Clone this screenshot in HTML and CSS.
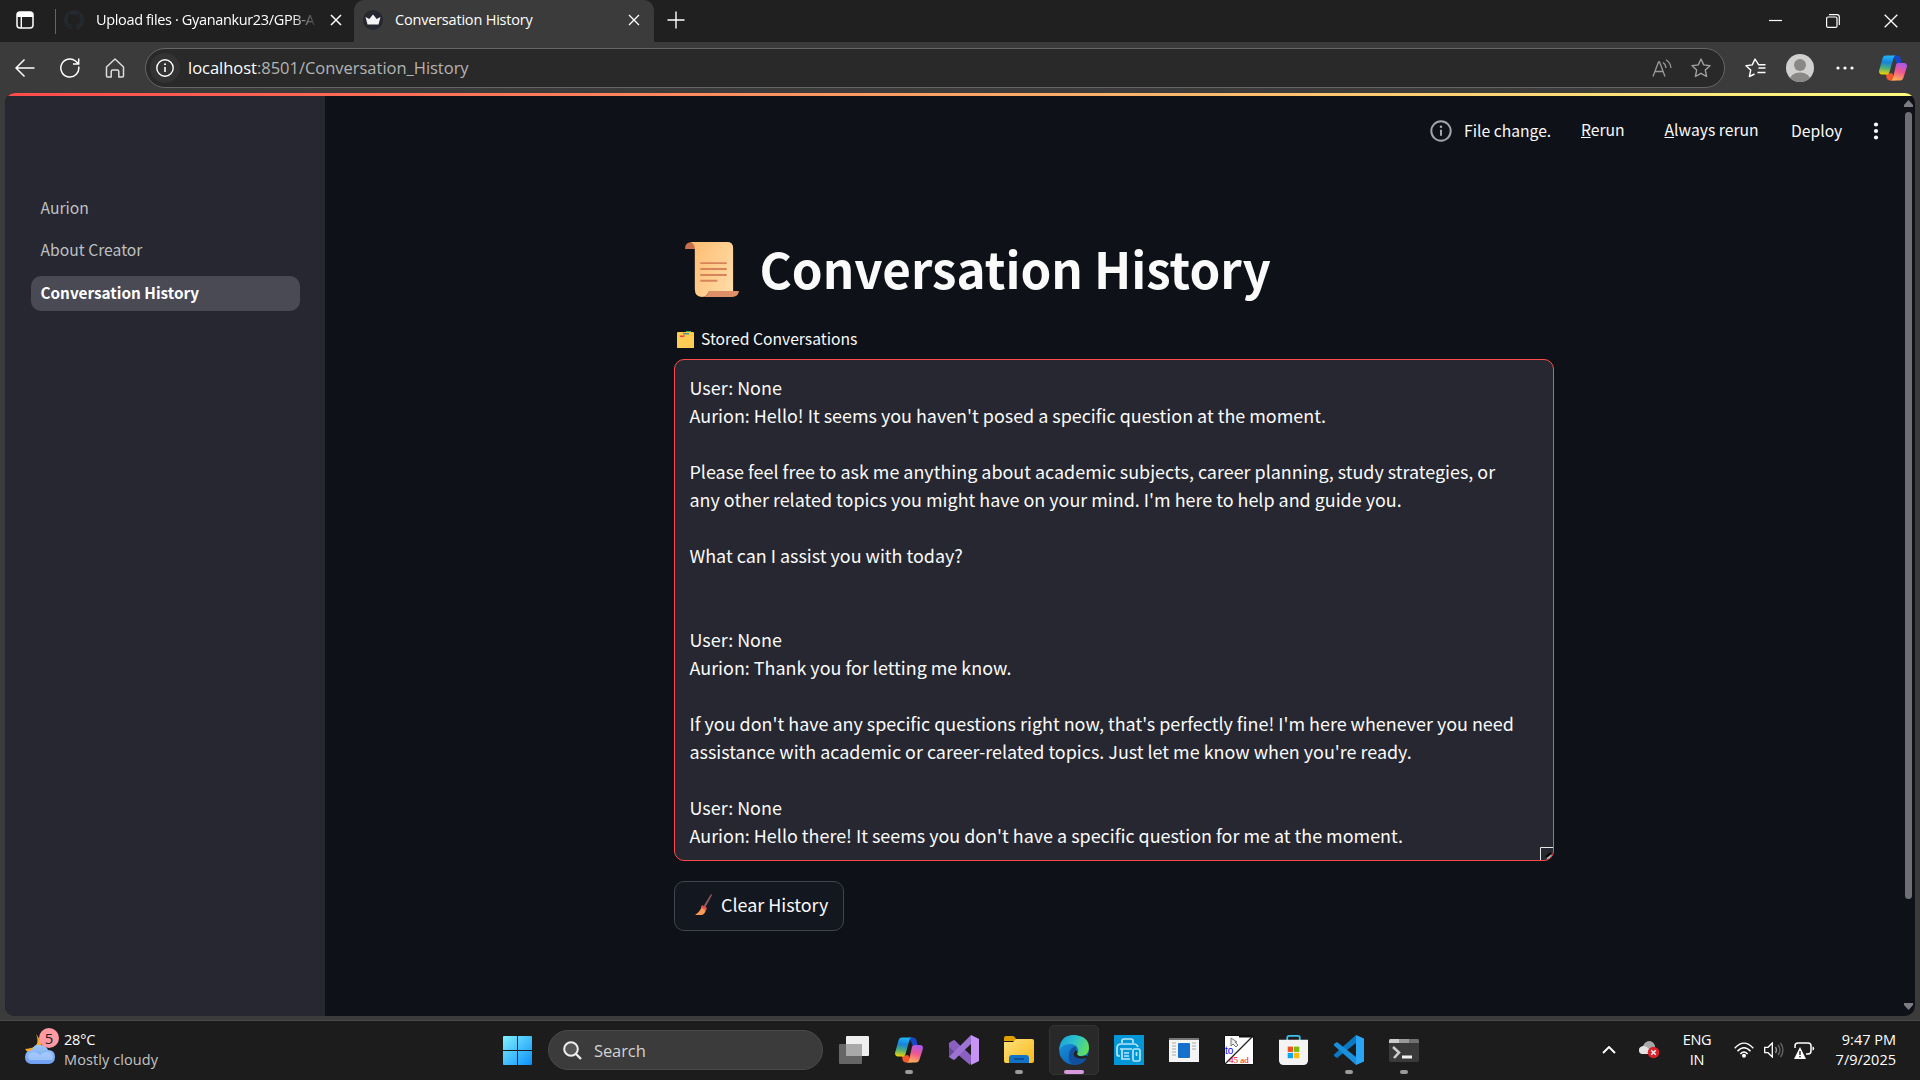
FILE: index.html
```html
<!DOCTYPE html>
<html lang="en">
<head>
<meta charset="utf-8">
<title>Conversation History</title>
<link rel="stylesheet" href="styles.css">
</head>
<body>
<svg width="0" height="0" class="defs">
  <defs>
    <linearGradient id="cpA" x1="0.3" y1="0" x2="0.2" y2="1"><stop offset="0" stop-color="#20b4f5"/><stop offset=".35" stop-color="#1684dc"/><stop offset=".65" stop-color="#4fae7b"/><stop offset="1" stop-color="#f5d500"/></linearGradient>
    <linearGradient id="cpB" x1="0.7" y1="0" x2="0.4" y2="1"><stop offset="0" stop-color="#a957f0"/><stop offset=".5" stop-color="#f0588f"/><stop offset="1" stop-color="#ffb057"/></linearGradient>
    <linearGradient id="win" gradientUnits="userSpaceOnUse" x1="0" y1="0" x2="30" y2="30"><stop offset="0" stop-color="#80f0ff"/><stop offset="1" stop-color="#0a90f8"/></linearGradient>
    <linearGradient id="fold" x1="0" y1="0" x2="1" y2="1"><stop offset="0" stop-color="#ffe07a"/><stop offset="1" stop-color="#fbb91a"/></linearGradient>
    <linearGradient id="edA" x1="0" y1="0.2" x2="1" y2="0.6"><stop offset="0" stop-color="#1aa0e0"/><stop offset=".5" stop-color="#2fc4c8"/><stop offset="1" stop-color="#62e05c"/></linearGradient>
    <linearGradient id="edB" x1="0" y1="0" x2="0.6" y2="1"><stop offset="0" stop-color="#1b9de2"/><stop offset="1" stop-color="#0c62b8"/></linearGradient>
    <linearGradient id="scr" x1="0" y1="0.2" x2="1" y2="0.8"><stop offset="0" stop-color="#ffbe75"/><stop offset="1" stop-color="#ffdba6"/></linearGradient>
    <linearGradient id="cloud" x1="0" y1="0" x2="0" y2="1"><stop offset="0" stop-color="#9cc6fb"/><stop offset="1" stop-color="#6d9df0"/></linearGradient>
    <symbol id="copilot" viewBox="0 0 28 26">
      <path d="M14 .5h4c2 0 3 1 3.500 3l1 4.500h-5z" fill="#1547c8"/>
      <path d="M7 19l6-1 4 7.500h-6c-2 0-3-1-3.500-3z" fill="#f0582e"/>
      <path d="M7 .5h10c-1 0-2 .8-2.500 2.500L10.500 17c-.6 2-1.500 2.500-3 2.500H3c-2.500 0-3.500-2-2.700-4.500L3.500 3.500C4 1.500 5.200.5 7 .5z" fill="url(#cpA)"/>
      <path d="M19.500 8H25c2.500 0 3.500 2 2.700 4.500l-3.200 10c-.6 2-1.700 3-3.500 3H11c1.500 0 2.500-.8 3-2.500L17 10c.4-1.400 1.200-2 2.500-2z" fill="url(#cpB)"/>
    </symbol>
  </defs>
</svg>

<header class="tabstrip">
  <svg class="workspaces" width="18" height="18" viewBox="0 0 18 18"><rect x="1" y="1" width="16" height="16" rx="3" fill="none" stroke="#fff" stroke-width="1.500"/><path d="M1 3.500Q1 1 4 1h10q3 0 3 2.500V6H1z" fill="#fff"/><path d="M5.300 5v12" stroke="#fff" stroke-width="1.400"/></svg>
  <span class="divider"></span>
  <div class="tab">
    <svg width="20" height="20" viewBox="0 0 16 16"><path fill="#24292f" d="M8 0a8 8 0 0 0-2.530 15.590c.4.070.55-.17.55-.38v-1.490c-2.010.37-2.530-.49-2.690-.94-.09-.23-.48-.94-.82-1.130-.28-.15-.68-.52-.01-.53.63-.01 1.080.58 1.230.82.72 1.210 1.870.87 2.330.66.070-.52.280-.87.510-1.070-1.780-.2-3.640-.89-3.640-3.950 0-.87.310-1.590.82-2.150-.08-.2-.36-1.020.08-2.120 0 0 .67-.21 2.200.82a7.600 7.600 0 0 1 4 0c1.530-1.040 2.200-.82 2.200-.82.44 1.100.16 1.920.08 2.120.51.56.82 1.270.82 2.150 0 3.070-1.870 3.750-3.650 3.950.29.25.54.73.54 1.480v2.200c0 .21.150.46.55.38A8 8 0 0 0 8 0z"/></svg>
    <span class="tab-title fade">Upload files · Gyanankur23/GPB-A</span>
    <svg class="x" width="12" height="12" viewBox="0 0 12 12"><path d="M1 1l10 10M11 1L1 11" stroke="#fff" stroke-width="1.500"/></svg>
  </div>
  <div class="tab active">
    <svg width="20" height="20" viewBox="0 0 20 20"><circle cx="10" cy="10" r="10" fill="#262730"/><path d="M2.500 7l3.800 2L10 4.500 13.700 9l3.800-2-2 7.500h-11z" fill="#f4f4f6"/></svg>
    <span class="tab-title">Conversation History</span>
    <svg class="x" width="12" height="12" viewBox="0 0 12 12"><path d="M1 1l10 10M11 1L1 11" stroke="#fff" stroke-width="1.300"/></svg>
  </div>
  <svg class="newtab" width="18" height="18" viewBox="0 0 18 18"><path d="M9 .5v17M.5 9h17" stroke="#fff" stroke-width="1.400"/></svg>
  <div class="winctl">
    <svg width="13" height="14" viewBox="0 0 13 14"><path d="M0 6.500h13" stroke="#fff" stroke-width="1.200"/></svg>
    <svg width="14" height="14" viewBox="0 0 14 14" fill="none" stroke="#fff" stroke-width="1.200"><rect x=".6" y="3" width="10.400" height="10.400" rx="1.500"/><path d="M3 .7h8q2.300 0 2.300 2.300v8"/></svg>
    <svg width="14" height="14" viewBox="0 0 14 14"><path d="M.7.7l12.600 12.600M13.300.7L.7 13.300" stroke="#fff" stroke-width="1.300"/></svg>
  </div>
</header>

<nav class="toolbar">
  <svg class="nb" width="20" height="20" viewBox="0 0 20 20" fill="none" stroke="#fff" stroke-width="1.500"><path d="M19.500 10H1M9.500 1.500L1 10l8.500 8.500"/></svg>
  <svg class="nb" width="20" height="20" viewBox="0 0 20 20" fill="none" stroke="#fff" stroke-width="1.500"><path d="M18.700 8.500A9 9 0 1 1 15.500 3l2.700 2.500M18.700.5v5.500H13"/></svg>
  <svg class="nb" width="20" height="20" viewBox="0 0 20 20" fill="none" stroke="#ddd" stroke-width="1.500" stroke-linejoin="round"><path d="M1.500 9L10 1l8.500 8v9q0 1-1 1h-3.700v-5.500q0-1.500-1.500-1.500h-4.600q-1.500 0-1.500 1.500V19H2.500q-1 0-1-1z"/></svg>
  <div class="omnibox">
    <span class="site"><svg width="18" height="18" viewBox="0 0 18 18"><circle cx="9" cy="9" r="8.200" fill="none" stroke="#fff" stroke-width="1.400"/><path d="M9 8v5" stroke="#fff" stroke-width="1.600"/><circle cx="9" cy="5.300" r="1" fill="#fff"/></svg></span>
    <span class="url"><b>localhost</b>:8501/Conversation_History</span>
    <svg class="read" width="20" height="18" viewBox="0 0 20 18" fill="none" stroke="#999" stroke-width="1.300"><path d="M1 17.500L6.500 3h1L13 17.500M3 12.500h8M11 3.500q2.500 1.500 3 5.500M14 .7q4.500 3 5 8.300"/></svg>
    <svg class="star" width="20" height="20" viewBox="0 0 20 20" fill="none" stroke="#a0a0a0" stroke-width="1.400" stroke-linejoin="round"><path d="M10 1l2.700 5.900 6.300.8-4.700 4.400 1.300 6.400L10 15.300l-5.600 3.200 1.300-6.400L1 7.700l6.300-.8z"/></svg>
  </div>
  <svg class="fav" width="21" height="20" viewBox="0 0 21 20" fill="none" stroke="#fff" stroke-width="1.400" stroke-linejoin="round"><path d="M20.500 10h-7M20.500 14.500h-8M20.500 6.700h-7L10 1 7.300 6.900 1 7.700l4.700 4.400-1.300 6.400L9.500 16"/></svg>
  <svg class="avatar" width="28" height="28" viewBox="0 0 28 28"><defs><clipPath id="av"><circle cx="14" cy="14" r="14"/></clipPath></defs><g clip-path="url(#av)"><rect width="28" height="28" fill="#d2d0ce"/><circle cx="14" cy="11" r="6" fill="#8a8886"/><ellipse cx="14" cy="26.500" rx="10.500" ry="8" fill="#8a8886"/></g></svg>
  <svg class="more" width="18" height="4" viewBox="0 0 18 4" fill="#fff"><circle cx="2" cy="2" r="1.600"/><circle cx="9" cy="2" r="1.600"/><circle cx="16" cy="2" r="1.600"/></svg>
  <svg class="cop" width="28" height="26"><use href="#copilot"/></svg>
</nav>

<div class="frame">
  <div class="page">
    <div class="decoration"></div>
    <aside class="sidebar">
      <a class="nav">Aurion</a>
      <a class="nav">About Creator</a>
      <a class="nav current">Conversation History</a>
    </aside>
    <main class="main">
      <div class="status">
        <svg width="22" height="22" viewBox="0 0 22 22"><circle cx="11" cy="11" r="9.700" fill="none" stroke="#a3a5a9" stroke-width="2"/><path d="M11 9.800v6" stroke="#a3a5a9" stroke-width="2"/><circle cx="11" cy="6.800" r="1.300" fill="#a3a5a9"/></svg>
        <span class="s-file">File change.</span>
        <span class="s-rerun"><u>R</u>erun</span>
        <span class="s-always"><u>A</u>lways rerun</span>
        <span class="s-deploy">Deploy</span>
        <svg class="kebab" width="6" height="18" viewBox="0 0 6 18" fill="#fafafa"><circle cx="3" cy="2.500" r="2.100"/><circle cx="3" cy="9" r="2.100"/><circle cx="3" cy="15.500" r="2.100"/></svg>
      </div>
      <section class="content">
        <h1>
          <svg width="54" height="55" viewBox="0 0 55 56"><path d="M0 7Q0 0 7 0q5 0 5 7z" fill="#c8704c"/><path d="M6 0h37q6 0 6 6v45H24q-2 5-6 5-8 0-8-8V7q0-5-4-7z" fill="url(#scr)"/><path d="M24 50h31q-1 6-7 6H17q6 0 7-6z" fill="#df8f68"/><g stroke="#d8845a" stroke-width="2"><path d="M15.500 21.500h27M15.500 27.500h27M15.500 33.500h27M15.500 39.500H33"/></g></svg>
          <span>Conversation History</span>
        </h1>
        <div class="label">
          <svg width="17" height="17" viewBox="0 0 17 17"><path d="M9 0h5v3H9z" fill="#32b36a"/><rect y="1" width="17" height="16" rx="1" fill="#ffca45"/><path d="M6 2h6v1.500H6z" fill="#5a8f9b"/><path d="M0 6h7l2-1.500h8V16q0 1-1 1H1q-1 0-1-1z" fill="#ffcb55"/><path d="M3 4.500h5L7 6H3z" fill="#f0405a"/></svg>
          <span>Stored Conversations</span>
        </div>
        <div class="textarea"><p>User: None</p><p>Aurion: Hello! It seems you haven't posed a specific question at the moment.</p><p></p><p>Please feel free to ask me anything about academic subjects, career planning, study strategies, or</p><p>any other related topics you might have on your mind. I'm here to help and guide you.</p><p></p><p>What can I assist you with today?</p><p></p><p></p><p>User: None</p><p>Aurion: Thank you for letting me know.</p><p></p><p>If you don't have any specific questions right now, that's perfectly fine! I'm here whenever you need</p><p>assistance with academic or career-related topics. Just let me know when you're ready.</p><p></p><p>User: None</p><p>Aurion: Hello there! It seems you don't have a specific question for me at the moment.</p>
          <svg class="grip" width="13" height="13" viewBox="0 0 13 13"><path d="M.5 13V.5H13" fill="none" stroke="#e6e6e6"/><path d="M6 10l5-4" stroke="#000" stroke-width="2"/><path d="M7 12l5-4" stroke="#b4b4b4" stroke-width="2"/></svg>
        </div>
        <div class="clear">
          <svg width="17" height="21" viewBox="0 0 17 21"><path d="M16 0l1 1-7 13-2-1z" fill="#8e5a5e"/><path d="M7 12l4 3q-1 6-5 6H0q5-3 7-9z" fill="#f79a56"/><path d="M7 11l5 3-1 2.500-5-3z" fill="#e2564d"/></svg>
          <span>Clear History</span>
        </div>
      </section>
    </main>
    <div class="scroll">
      <svg width="9" height="7" viewBox="0 0 9 7"><path d="M4.500 0L9 5v2H0V5z" fill="#7b7d80"/></svg>
      <span class="thumb"></span>
      <svg width="9" height="7" viewBox="0 0 9 7"><path d="M4.500 7L9 2V0H0v2z" fill="#7b7d80"/></svg>
    </div>
  </div>
</div>

<footer class="taskbar">
  <div class="weather">
    <svg width="34" height="38" viewBox="0 0 34 38"><path d="M11 6q6 14-11 15 4 6 12 4 9-6-1-19z" fill="#f9a825"/><path d="M6 36q-6-1-6-7t7-7q2-6 8-5 6 0 8 5 7 0 7 7 0 6-6 7z" fill="url(#cloud)"/><path d="M3 27q4-5 9-2l3 2q5-5 11-2 3 4 1 7H4z" fill="#b4d3ff" opacity=".6"/><circle cx="24" cy="10" r="10" fill="#ff99a4"/><text x="24" y="15.500" text-anchor="middle" class="badge">5</text></svg>
    <div><div class="deg">28°C</div><div class="sky">Mostly cloudy</div></div>
  </div>
  <svg class="start" width="29" height="29" viewBox="0 0 30 30" fill="url(#win)"><path d="M1 0h13.500v14.500H0V1q0-1 1-1zM15.500 0H29q1 0 1 1v13.500H15.500zM0 15.500h14.500V30H1q-1 0-1-1zM15.500 15.500H30V29q0 1-1 1H15.500z"/></svg>
  <div class="search">
    <svg width="19" height="19" viewBox="0 0 19 19" fill="none" stroke="#eee" stroke-width="2"><circle cx="8" cy="8" r="6.800" fill="#555"/><path d="M13 13l5 5" stroke-width="2.400"/></svg>
    <span>Search</span>
  </div>
  <div class="apps">
    <div class="app"><svg width="30" height="28" viewBox="0 0 30 28"><rect x="7" width="23" height="20" rx="1" fill="#efefef"/><rect y="8" width="23" height="20" rx="1" fill="#666"/><path d="M7 8h16v12H7z" fill="#a9a9a9"/></svg></div>
    <div class="app"><svg width="28" height="26"><use href="#copilot"/></svg><i></i></div>
    <div class="app"><svg width="30" height="30" viewBox="0 0 30 30"><path d="M0 8l5-3 3 2v16l-3 2-5-3z" fill="#6b4a9c"/><path d="M5 5l19 17-3 8L0 12V8z" fill="#8a5fc0"/><path d="M0 22L22 0v9L5 25z" fill="#9c72d2"/><path d="M22 0l8 4v22l-8 4V0z" fill="#c793f5"/></svg></div>
    <div class="app"><svg width="30" height="28" viewBox="0 0 30 28"><path d="M0 2q0-2 2-2h7q1.500 0 3 3l1 2H0z" fill="#dfa000"/><path d="M0 6h9l3-3h16q2 0 2 2v20q0 2-2 2H2q-2 0-2-2z" fill="url(#fold)"/><path d="M5 27v-5q0-3 3-3h14q3 0 3 3v5z" fill="#1073c8"/><path d="M10 23h10" stroke="#0a4b8c" stroke-width="1.600"/></svg><i></i></div>
    <div class="app on"><svg width="30" height="30" viewBox="0 0 30 30"><circle cx="15" cy="15" r="14.800" fill="url(#edB)"/><path d="M10 21q0-9 8-10-2 3 0 8 2 4 10 3-3 8-13 8Q9 28 10 21z" fill="#12509c"/><path d="M.3 15Q1 0 15 0q15 1 15 13 0 7-8 8-4 0-4-2 2-2 1-5-2-5-8-5-8 0-10.700 6z" fill="url(#edA)"/><path d="M17 15q2 1 1 4 1 3 6 2 3-.5 5 0l-1 2q-8 2-12-1-3-3 1-7z" fill="#242424"/></svg><i></i></div>
    <div class="app"><svg width="30" height="30" viewBox="0 0 30 30" fill="none" stroke="#b5e6fb" stroke-width="1.700"><path d="M0 0h30v30H0z" fill="#0096d8" stroke="none"/><path d="M8 8V6q0-2 2-2h7q2 0 2 2v2M6 21H5q-2 0-2-2v-6q0-4 4-4h13q3 0 4 3M6 14h12M8 14v10h8M10 18h5M10 21h5"/><rect x="19" y="14" width="7" height="12" rx="1.500"/><path d="M22.500 17v4"/></svg></div>
    <div class="app"><svg width="30" height="24" viewBox="0 0 30 24"><path d="M0 1h30v23H0z" fill="#f4f4f4"/><path d="M0 0h30v2H0z" fill="#777"/><rect x="9" y="5" width="12" height="15" rx="1" fill="#1470cc"/><path d="M3 5h4M3 8h4M3 11h4M3 14h4M3 17h4M23 5h4M23 8h4M23 11h4" stroke="#aaa" stroke-width="1.200"/></svg></div>
    <div class="app"><svg width="30" height="30" viewBox="0 0 30 30"><path d="M.5.5h29v29H.5z" fill="#fff" stroke="#111"/><path d="M15 1h14v1.500H15z" fill="#111"/><path d="M1 29L28 2" stroke="#222" stroke-width="1.200"/><path d="M7 3v8l2-2 3 3 2-2-3-3h2z" fill="#eee" stroke="#777"/><text x="1" y="19" class="t-to">to</text><text x="5" y="28" class="t-red">45 ad</text></svg></div>
    <div class="app store"><svg width="29" height="30" viewBox="0 0 30 31"><path d="M8.500 8V3q0-2 2-2h9q2 0 2 2v5" fill="none" stroke="#3cc2f2" stroke-width="1.800"/><path d="M0 5h30v21q0 5-5 5H5q-5 0-5-5z" fill="#f3f3f3"/><path d="M9 12h5.500v5.500H9z" fill="#f05024"/><path d="M15.500 12H21v5.500h-5.500z" fill="#80bb03"/><path d="M9 18.500h5.500V24H9z" fill="#04a6f0"/><path d="M15.500 18.500H21V24h-5.500z" fill="#ffba08"/></svg></div>
    <div class="app"><svg width="30" height="30" viewBox="0 0 30 30"><path d="M0 19.500L22 0v8L3 23 0 21z" fill="#0a78c2"/><path d="M0 10.500L22 30v-8L3 7 0 9z" fill="#1a8fdc"/><path d="M22 0l8 3.500v23L22 30z" fill="#2aa4f4"/></svg><i></i></div>
    <div class="app"><svg width="30" height="23" viewBox="0 0 30 23"><rect width="30" height="23" rx="1.500" fill="#3a3a3a"/><path d="M0 4V1.500Q0 0 1.500 0H10v4z" fill="#ccc"/><path d="M10 0h10v4H10z" fill="#999"/><path d="M20 0h8.500Q30 0 30 1.500V4H20z" fill="#707070"/><path d="M4 8l6 5.500L5 19" fill="none" stroke="#ccc" stroke-width="2.600"/><path d="M13 18h10" stroke="#f2f2f2" stroke-width="3"/></svg><i></i></div>
  </div>
  <div class="tray">
    <svg class="up" width="14" height="8" viewBox="0 0 14 8"><path d="M1 7l6-6 6 6" fill="none" stroke="#fff" stroke-width="1.900"/></svg>
    <svg class="drive" width="21" height="18" viewBox="0 0 21 18"><path d="M4 13q-4 0-4-4 0-3 4-4 2-5 7-5 4 1 5 5v8z" fill="#a8a8a8"/><path d="M4 13q-4 0-4-4 0-3 4-4 4 0 7 4v4z" fill="#e3e3e3"/><circle cx="14.500" cy="11.500" r="5.800" fill="#d9232b"/><path d="M12.200 9.200l4.600 4.600m0-4.600l-4.600 4.600" stroke="#fff" stroke-width="1.300"/></svg>
    <div class="lang">ENG<br>IN</div>
    <svg class="wifi" width="20" height="16" viewBox="0 0 20 16" fill="none" stroke="#fff" stroke-width="1.400"><path d="M.7 6.300Q10-4 19.300 6.300M3.500 9.200q6.500-7 13 0M6.300 12q3.700-4 7.400 0"/><circle cx="10" cy="13.800" r="1.300" fill="#fff"/></svg>
    <svg class="vol" width="20" height="16" viewBox="0 0 20 16" fill="none" stroke="#fff" stroke-width="1.300"><path d="M.7 5.300H4L8.300 1v14L4 10.700H.7z"/><path d="M11.500 5q2 3 0 6" stroke="#999"/><path d="M14 3q4 5 0 10M16.500 1q5 7 0 14" stroke="#666"/></svg>
    <svg class="bat" width="21" height="18" viewBox="0 0 21 18"><path d="M1 7V5q0-3 3-3h10q3 0 3 3v5q0 3-3 3h-2" fill="none" stroke="#fff" stroke-width="1.500"/><path d="M18.500 5.500q1.700 0 1.700 2t-1.700 2z" fill="#fff"/><path d="M6 6l6 12H0z" fill="#fff"/><path d="M6 10v4M6 15v1.500" stroke="#222" stroke-width="1.400"/></svg>
    <div class="clock">9:47 PM<br>7/9/2025</div>
  </div>
</footer>
</body>
</html>
```
FILE: styles.css
```css
* { box-sizing: border-box; }
body {
  margin: 0;
  width: 1920px;
  height: 1080px;
  overflow: hidden;
  display: flex;
  flex-direction: column;
  background: #3b3b3b;
  color: #fff;
  font-family: "Open Sans", "Noto Sans", sans-serif;
}
svg { display: block; flex: none; }
.defs { position: absolute; }
span, a, p, div { white-space: nowrap; }

/* Tab strip */
.tabstrip { height: 42px; flex: none; display: flex; align-items: center; background: #202020; }
.workspaces { margin-left: 16px; margin-top: -2px; }
.divider { width: 1px; height: 25px; margin-left: 21px; background: #666; }
.tab { width: 298px; height: 42px; display: flex; align-items: center; padding: 0 12px 3px 8px; }
.tab-title { flex: 1; margin-left: 12px; font-size: 14.500px; letter-spacing: -0.35px; overflow: hidden; }
.active .tab-title { letter-spacing: -0.2px; }
.fade { -webkit-mask-image: linear-gradient(90deg, #000 88%, transparent); mask-image: linear-gradient(90deg, #000 88%, transparent); }
.tab .x { margin-left: 12px; }
.tab.active { width: 300px; padding: 0 14px 3px 9px; background: #3b3b3b; border-radius: 10px 10px 0 0; }
.newtab { margin-left: 13px; margin-top: -3px; }
.winctl { margin-left: auto; display: flex; gap: 44px; padding-right: 22px; }

/* Toolbar */
.toolbar { height: 51px; flex: none; display: flex; align-items: center; padding-top: 1px; }
.nb { margin-left: 15px; margin-right: 10px; }
.omnibox { width: 1580px; height: 40px; margin-left: 10px; display: flex; align-items: center; padding: 0 13px 0 4px; border: 1px solid #666; border-radius: 20px; background: #292929; }
.site { width: 30px; height: 30px; display: grid; place-items: center; border-radius: 50%; background: #333; }
.url { flex: 1; margin-left: 8px; padding-bottom: 1px; font-size: 16.500px; letter-spacing: -0.02px; color: #b4b4b4; }
.url b { font-weight: 400; color: #fff; }
.star { margin-left: 19px; }
.fav { margin-left: 20px; }
.avatar { margin-left: 20px; }
.more { margin-left: 22px; }
.cop { margin-left: 25px; }

/* Page */
.frame { height: 928px; flex: none; padding: 0 5px; background: #3b3b3b; border-bottom: 1px solid #484848; }
.page {
  height: 923px;
  position: relative;
  display: flex;
  overflow: hidden;
  border-radius: 10px;
  background: #0e1117;
  color: #fafafa;
  font-family: "Noto Sans CJK SC", sans-serif;
}
.decoration { position: absolute; inset: 0 0 auto 0; height: 3px; background: linear-gradient(90deg, #ff4b4b, #fffd80); }
.sidebar { width: 320px; padding: 99px 25px 0 26px; background: #262730; }
.nav { display: block; height: 35px; margin-bottom: 7px; padding-left: 9.500px; border-radius: 10px; font-size: 15.700px; line-height: 31px; color: #bfc0c3; }
.nav.current { background: #494a54; color: #fff; font-size: 15.300px; font-weight: 700; line-height: 33px; }
.main { flex: 1; display: flex; flex-direction: column; }
.status { height: 75px; display: flex; align-items: center; padding-left: 1105px; font-size: 15.700px; line-height: 24px; }
.status span { padding-bottom: 2px; }
.status .s-file, .status .s-deploy { padding-bottom: 0; }
.s-file { width: 88px; margin-left: 12px; }
.s-rerun { width: 44px; margin-left: 29px; }
.s-always { width: 95px; margin-left: 39.500px; }
.s-deploy { width: 52px; margin-left: 31.500px; }
.kebab { margin-left: 29.500px; }
.content { width: 880px; margin-left: 349px; }
h1 { margin: 74px 0 0; height: 55px; display: flex; align-items: center; padding-left: 11px; font-size: 49.300px; line-height: 50px; font-weight: 700; }
h1 span { margin-left: 20.500px; padding-bottom: 3px; }
.label { height: 22px; margin-top: 31px; display: flex; align-items: center; padding-left: 3px; font-size: 15.700px; line-height: 20px; }
.label span { margin-left: 7px; }
.textarea { position: relative; height: 502px; margin-top: 9px; padding: 13px 14.500px; border: 1px solid #ff4b4b; border-radius: 10px; background: #262730; font-size: 17.930px; line-height: 28px; overflow: hidden; }
.textarea p { margin: 0; height: 28px; }
.grip { position: absolute; right: 0; bottom: 0; }
.clear { width: 170px; height: 50px; margin-top: 20px; display: flex; align-items: center; padding-left: 20px; border: 1px solid #41444c; border-radius: 10px; background: #131720; font-size: 17.930px; line-height: 24px; }
.clear svg { margin-top: -3px; }
.clear span { margin-left: 9px; padding-bottom: 5px; }
.scroll { width: 9px; margin-right: 2px; padding: 7px 0 6px; display: flex; flex-direction: column; align-items: center; justify-content: space-between; }
.thumb { width: 7px; height: 787px; margin: 5px 0 auto; border-radius: 4px; background: #6d6f72; }

/* Taskbar */
.taskbar { height: 59px; flex: none; display: flex; align-items: center; padding-bottom: 1px; background: #1c1c1c; }
.weather { width: 503px; display: flex; align-items: center; padding-left: 25px; font-size: 14.500px; line-height: 20px; letter-spacing: -0.2px; }
.weather > div { margin-left: 5px; }
.weather svg { margin-top: -6px; }
.sky { color: #c4c4c4; letter-spacing: 0.1px; }
.badge { font-size: 15px; fill: #222; }
.search { width: 275px; height: 40px; margin-left: 16px; display: flex; align-items: center; padding-left: 14px; border: 1px solid #4a4a4a; border-radius: 20px; background: #3b3b3b; font-size: 16.500px; letter-spacing: -0.1px; color: #d2d2d2; }
.search span { margin-left: 12px; }
.apps { display: flex; gap: 5px; margin-left: 6px; }
.app { position: relative; width: 50px; height: 50px; display: grid; place-items: center; border-radius: 5px; }
.app.on { background: #292929; border: 1px solid #333; }
.app.store { padding-right: 1px; }
.app i { position: absolute; left: 21px; bottom: 1px; width: 8px; height: 4px; border-radius: 2px; background: #9a9a9a; }
.app.on i { left: 14px; bottom: 0; width: 20px; background: #d79adf; }
.t-to { font: 10px "Liberation Sans", sans-serif; fill: #00f; }
.t-red { font: 9px "Liberation Serif", serif; fill: #f00; }
.tray { margin-left: auto; display: flex; align-items: center; padding-right: 24px; font-size: 14.500px; line-height: 20px; letter-spacing: -0.3px; }
.drive { margin-left: 23px; }
.lang { width: 40px; margin-left: 17px; text-align: center; }
.wifi { margin-left: 17px; }
.vol { margin-left: 10px; }
.bat { margin-left: 10px; }
.clock { width: 70px; margin-left: 11px; text-align: right; letter-spacing: 0; }
```
